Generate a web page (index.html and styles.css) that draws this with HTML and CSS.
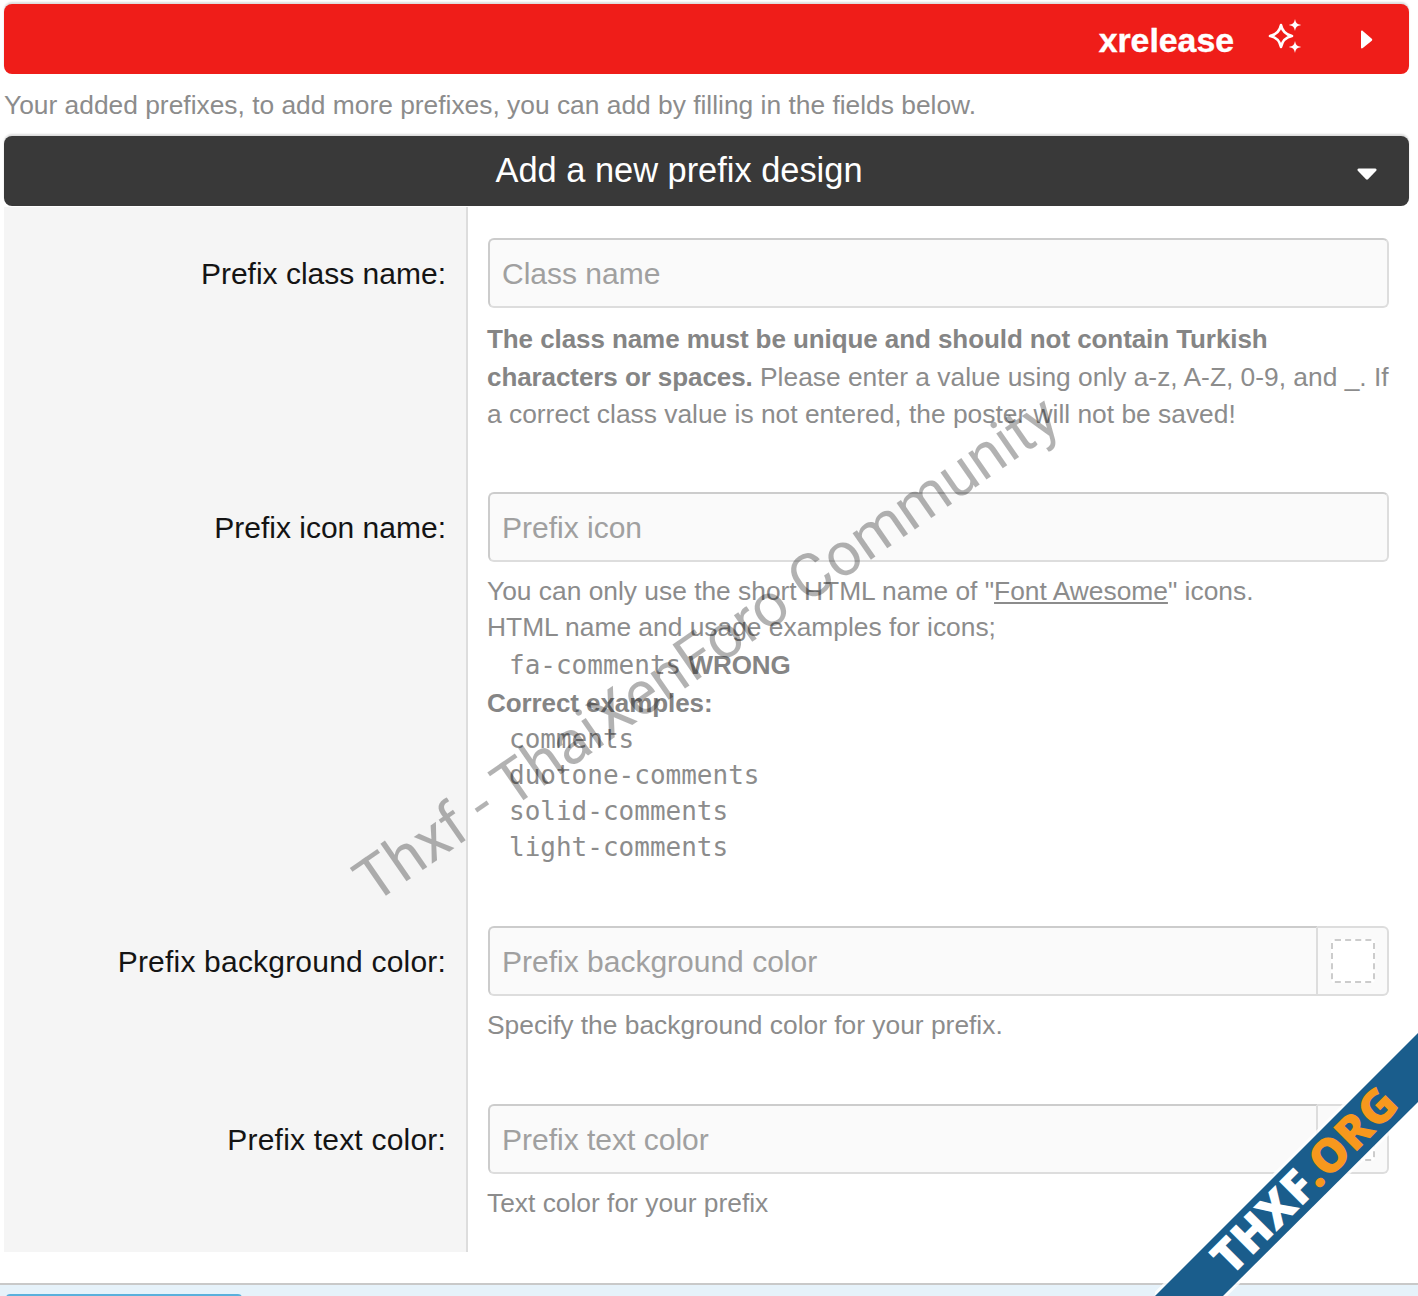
FILE: index.html
```html
<!DOCTYPE html>
<html lang="en">
<head>
<meta charset="utf-8">
<title>Add a new prefix design</title>
<link rel="stylesheet" href="styles.css">
</head>
<body>
<main class="panel">
  <div class="bar bar-red">
    <span class="bar-red-name">xrelease</span>
    <svg class="sparkles" width="36" height="36" viewBox="0 0 36 36" aria-hidden="true">
      <path class="sparkle-outline" d="M14 6c1.300 6.500 4.500 9.700 11 11-6.500 1.300-9.700 4.500-11 11-1.300-6.500-4.500-9.700-11-11 6.500-1.300 9.700-4.500 11-11z"/>
      <path class="sparkle-solid" d="M28 0c1.100 4.400 1.600 4.900 6.200 6-4.600 1.100-5.100 1.600-6.200 6-1.100-4.400-1.600-4.900-6.200-6 4.600-1.100 5.100-1.600 6.200-6z"/>
      <path class="sparkle-solid" d="M28 22c1.100 4.400 1.600 4.900 6.200 6-4.600 1.100-5.100 1.600-6.200 6-1.100-4.400-1.600-4.900-6.200-6 4.600-1.100 5.100-1.600 6.200-6z"/>
    </svg>
    <svg class="arrow-right" width="13" height="19" viewBox="0 0 13 19" aria-hidden="true"><path d="M1 1.500v16c0 1 1 1.300 1.800.6l9-7.300c.6-.6.6-1.500 0-2l-9-7.900C2 .2 1 .5 1 1.500z"/></svg>
  </div>
  <p class="intro">Your added prefixes, to add more prefixes, you can add by filling in the fields below.</p>
  <div class="bar bar-dark">
    <h2 class="bar-dark-title">Add a new prefix design</h2>
    <svg class="arrow-down" width="20" height="12" viewBox="0 0 20 12" aria-hidden="true"><path d="M1.800 .5h16.400c1.200 0 1.800 1.300 1 2.200l-8.200 8.600c-.6.6-1.400.6-2 0L.8 2.700C0 1.800.6.500 1.800.5z"/></svg>
  </div>
  <form class="form">
    <div class="form-row row-class">
      <label class="form-label">Prefix class name:</label>
      <div class="form-field">
        <div class="input">Class name</div>
        <p class="help help-first"><strong>The class name must be unique and should not contain Turkish characters or spaces.</strong> Please enter a value using only a-z, A-Z, 0-9, and _. If a correct class value is not entered, the poster will not be saved!</p>
      </div>
    </div>
    <div class="form-row row-icon">
      <label class="form-label">Prefix icon name:</label>
      <div class="form-field">
        <div class="input">Prefix icon</div>
        <div class="help">
          <div>You can only use the short HTML name of "<a class="help-link">Font Awesome</a>" icons.</div>
          <div>HTML name and usage examples for icons;</div>
          <div class="code-line code-wrong"><code>fa-comments</code> <strong>WRONG</strong></div>
          <div><strong>Correct examples:</strong></div>
          <div class="code-line code-right"><code>comments</code></div>
          <div class="code-line"><code>duotone-comments</code></div>
          <div class="code-line"><code>solid-comments</code></div>
          <div class="code-line"><code>light-comments</code></div>
        </div>
      </div>
    </div>
    <div class="form-row row-bg">
      <label class="form-label">Prefix background color:</label>
      <div class="form-field">
        <div class="input-group">
          <div class="input input-joined">Prefix background color</div>
          <div class="addon"><span class="swatch"></span></div>
        </div>
        <p class="help">Specify the background color for your prefix.</p>
      </div>
    </div>
    <div class="form-row row-text">
      <label class="form-label">Prefix text color:</label>
      <div class="form-field">
        <div class="input-group">
          <div class="input input-joined">Prefix text color</div>
          <div class="addon"><span class="swatch"></span></div>
        </div>
        <p class="help">Text color for your prefix</p>
      </div>
    </div>
  </form>
</main>
<footer class="footer"><span class="footer-tab"></span></footer>
<div class="watermark">Thxf - ThaiXenForo Community</div>
<svg class="ribbon" width="263" height="263" viewBox="0 0 263 263" aria-label="THXF.ORG">
  <polygon class="ribbon-halo" points="263,0 263,69 68,263 0,263"/>
  <polygon class="ribbon-band" points="263,0 263,69 68,263 0,263"/>
  <text class="ribbon-text" transform="translate(76 244) rotate(-45)">THXF<tspan class="ribbon-org">.ORG</tspan></text>
</svg>
</body>
</html>
```
FILE: styles.css
```css
* { box-sizing: border-box; }
html, body { margin: 0; padding: 0; }
body {
  position: relative;
  width: 1418px;
  height: 1296px;
  overflow: hidden;
  background: #fff;
  font-family: "Liberation Sans", Arial, sans-serif;
  color: #8c8c8c;
}
.panel { padding: 4px 9px 0 4px; }
.bar {
  height: 70px;
  border-radius: 8px;
  display: flex;
  align-items: center;
}
.bar-red {
  background: #ef1d19;
  justify-content: flex-end;
  color: #fff;
  box-shadow: 0 -2px 2px #ddd;
}
.bar-red-name { font-size: 33.8px; font-weight: 700; position: relative; top: 1px; -webkit-text-stroke: .4px #fff; }
.sparkles { margin-left: 33px; margin-top: -5px; }
.sparkle-outline { fill: none; stroke: #fff; stroke-width: 2.6; stroke-linejoin: round; }
.sparkle-solid { fill: #fff; }
.arrow-right { fill: #fff; margin-left: 57px; margin-right: 36px; }
.intro {
  margin: 0;
  height: 62px;
  padding-top: 13px;
  font-size: 26.36px;
  line-height: 36px;
  color: #8c8c8c;
}
.bar-dark {
  position: relative;
  background: #393939;
  color: #fff;
  justify-content: center;
  padding-right: 55px;
  box-shadow: 0 -2px 2px #ddd;
}
.bar-dark-title { margin: 0 0 1px; font-size: 34.4px; font-weight: 400; }
.arrow-down { position: absolute; right: 32px; top: 32px; fill: #fff; }
.form { margin-top: 1px; }
.form-row { display: grid; grid-template-columns: 464px 1fr; }
.form-label {
  background: #f5f5f5;
  border-right: 2px solid #ddd;
  padding: 47px 20px 0 0;
  text-align: right;
  font-size: 30px;
  line-height: 40px;
  color: #141414;
}
.form-field { padding: 31px 20px 0 20px; }
.row-class { height: 254px; }
.row-icon { height: 434px; }
.row-bg { height: 178px; }
.row-text { height: 179px; }
.row-bg .form-label, .row-text .form-label { letter-spacing: .2px; }
.input {
  height: 70px;
  padding: 2px 12px 0;
  display: flex;
  align-items: center;
  font-size: 30px;
  color: #a0a0a0;
  background: #fafafa;
  border: 2px solid #ddd;
  border-top-color: #ccc;
  border-left-color: #ccc;
  border-radius: 6px;
}
.input-group { display: flex; }
.input-joined { flex: 1; border-radius: 6px 0 0 6px; }
.addon {
  width: 71px;
  height: 70px;
  display: flex;
  align-items: center;
  justify-content: center;
  background: #fafafa;
  border: 2px solid #ddd;
  border-left: 0;
  border-radius: 0 6px 6px 0;
}
.swatch {
  width: 44px;
  height: 44px;
  background: #fff;
  border: 2px dashed #ccc;
  border-radius: 4px;
}
.help {
  margin: 11px 0 0 -1px;
  font-size: 26.36px;
  line-height: 36px;
  color: #8c8c8c;
}
.help-first { margin-top: 12px; margin-right: -6px; }
.help strong { font-size: 26px; letter-spacing: -.08px; line-height: 38px; color: #858585; }
.help-link { color: #8c8c8c; text-decoration: underline; }
.code-line { padding-left: 22px; }
.code-wrong { margin-top: 1px; }
.code-right { margin-top: -1px; }
code { font-family: "DejaVu Sans Mono", monospace; font-size: 26px; }
.footer {
  position: absolute;
  left: 0;
  right: 0;
  top: 1283px;
  bottom: 0;
  background: #e6f2fa;
  border-top: 2px solid #c9c9c9;
}
.footer-tab {
  position: absolute;
  left: 6px;
  top: 9px;
  width: 236px;
  height: 6px;
  background: #5ab0dc;
  border-radius: 4px 4px 0 0;
}
.watermark {
  position: absolute;
  left: 384px;
  top: 840px;
  transform-origin: 0 100%;
  transform: rotate(-34.7deg);
  font-family: "Roboto", "Liberation Sans", sans-serif;
  font-weight: 400;
  font-size: 61px;
  line-height: 80px;
  white-space: nowrap;
  color: rgba(0, 0, 0, .3);
}
.ribbon { position: absolute; right: 0; bottom: 0; }
.ribbon-halo { fill: none; stroke: rgba(255, 255, 255, .8); stroke-width: 6; }
.ribbon-band { fill: #1a5d8c; }
.ribbon-text { fill: #fff; font-family: "Open Sans", "Liberation Sans", sans-serif; font-weight: 800; font-size: 47px; }
.ribbon-org { fill: #f7981d; }
```
